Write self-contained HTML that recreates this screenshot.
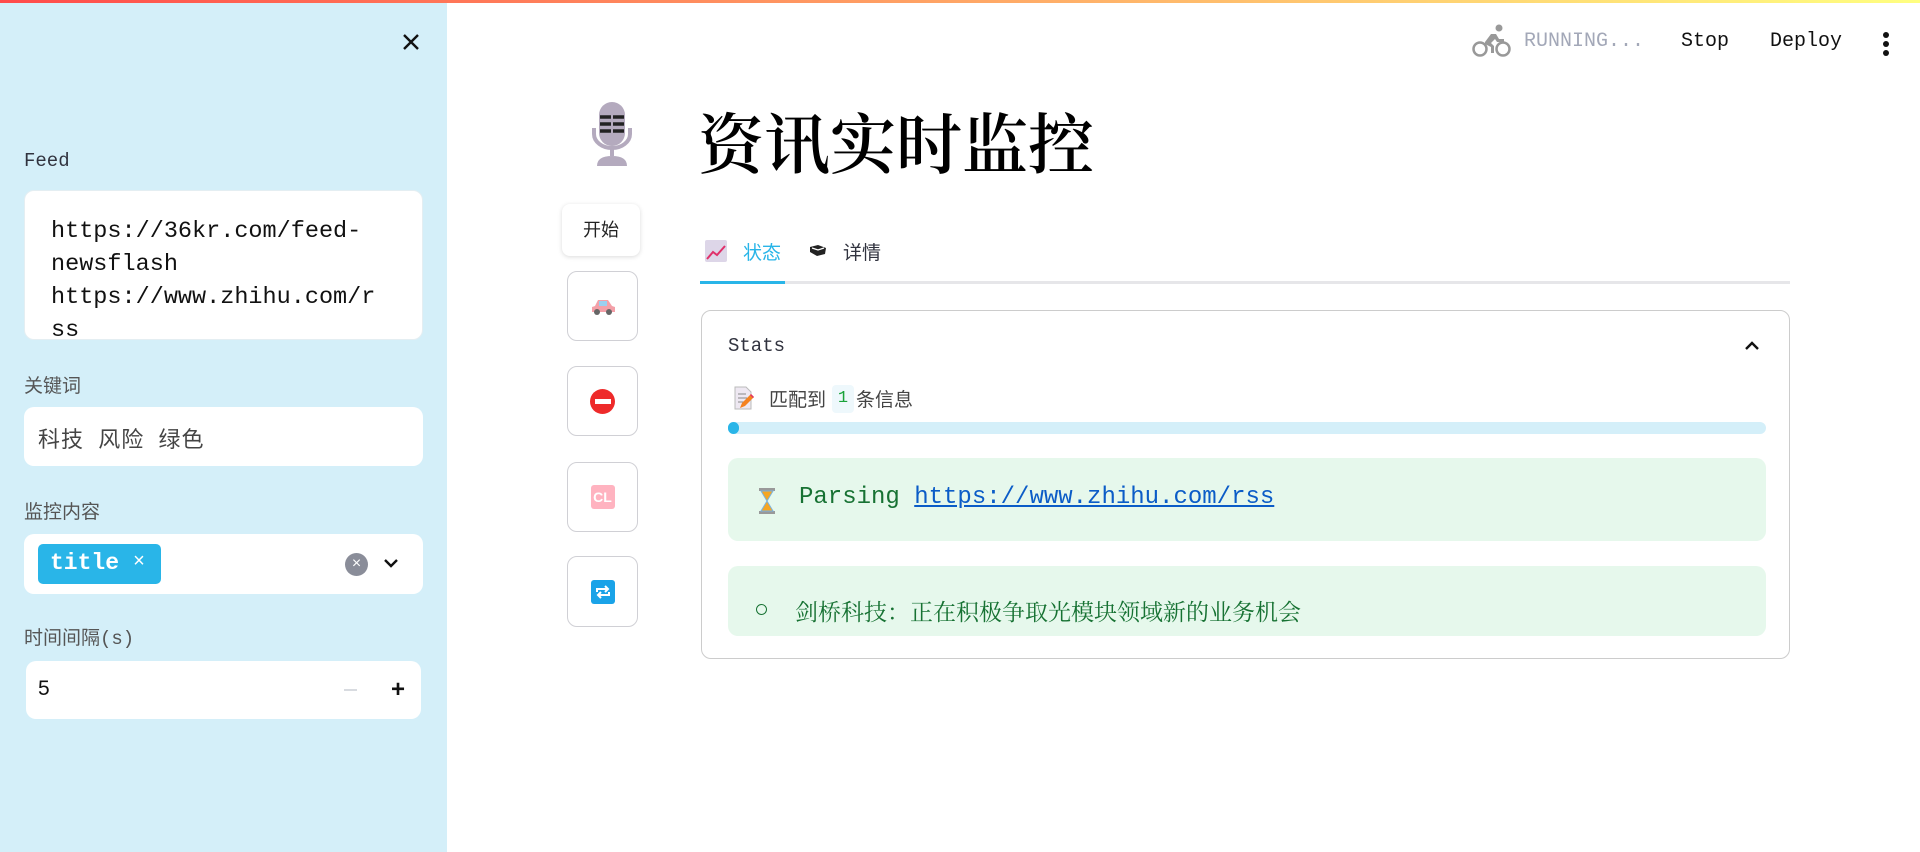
<!DOCTYPE html>
<html><head><meta charset="utf-8"><style>
*{box-sizing:border-box;margin:0;padding:0}
body{width:1920px;height:852px;overflow:hidden;background:#fff;font-family:"Liberation Sans","Noto Sans CJK SC",sans-serif;position:relative;color:#31333f}
.bar{position:absolute;left:0;top:0;width:1920px;height:3px;background:linear-gradient(90deg,#ff4b4b,#ffb86b 60%,#ffff80);z-index:5}
.side{position:absolute;left:0;top:0;width:447px;height:852px;background:#d4eff9}
.mono{font-family:"Liberation Mono","Noto Sans CJK SC",monospace}
.lbl{position:absolute;left:24px;font-size:17px;color:#31333f}
.box{position:absolute;left:24px;width:399px;background:#fff;border-radius:10px}
.a{position:absolute}
.btn{position:absolute;left:567px;width:71px;border:1px solid #d0d0d5;border-radius:10px;background:#fff;display:flex;align-items:center;justify-content:center}
</style></head><body>
<div class="bar"></div>
<div class="side">
 <svg class="a" style="left:401px;top:32px" width="20" height="20" viewBox="0 0 20 20"><path d="M3 3L17 17M17 3L3 17" stroke="#111" stroke-width="2.4"/></svg>
 <div class="lbl mono" style="top:150px;font-size:19px">Feed</div>
 <div class="box mono" style="top:190px;height:150px;overflow:hidden;padding:24px 10px 0 26px;font-size:23.5px;line-height:33px;color:#111;border:1px solid #e4eef2;white-space:nowrap">https://36kr.com/feed-<br>newsflash<br>https://www.zhihu.com/r<br>ss</div>
 <div class="lbl" style="top:371px;font-size:19px;color:#555">关键词</div>
 <div class="box" style="top:407px;height:59px;padding:15px 14px;font-size:22px;color:#444;letter-spacing:1px">科技&nbsp; 风险&nbsp; 绿色</div>
 <div class="lbl" style="top:497px;font-size:19px;color:#555">监控内容</div>
 <div class="box" style="top:534px;height:60px">
  <div class="a mono" style="left:14px;top:10px;width:123px;height:40px;background:#29b5e8;border-radius:5px;color:#fff;font-size:23px;font-weight:bold;padding:6px 0 0 12px;white-space:nowrap">title<span style="font-weight:normal;font-size:20px;position:absolute;left:95px;top:7px">×</span></div>
  <div class="a" style="left:321px;top:19px;width:23px;height:23px;border-radius:50%;background:#8a8d99;color:#fff;font-size:16px;text-align:center;line-height:22px">×</div>
  <svg class="a" style="left:358px;top:22px" width="18" height="14" viewBox="0 0 18 14"><path d="M3 4l6 6 6-6" stroke="#111" stroke-width="2.4" fill="none"/></svg>
 </div>
 <div class="lbl mono" style="top:623px;font-size:19px;color:#555">时间间隔(s)</div>
 <div class="box" style="top:661px;left:26px;width:395px;height:58px">
  <div class="a" style="left:12px;top:16px;font-size:21px;color:#111">5</div>
  <div class="a" style="left:318px;top:28px;width:13px;height:2px;background:#d8dbe0"></div>
  <div class="a" style="left:365px;top:22px;font-size:24px;font-weight:bold;color:#111;line-height:14px">+</div>
 </div>
</div>
<!-- header -->
<svg class="a" style="left:1472px;top:24px" width="40" height="34" viewBox="0 0 40 34"><circle cx="8" cy="25" r="6.5" stroke="#999" stroke-width="2.5" fill="none"/><circle cx="31" cy="25" r="6.5" stroke="#999" stroke-width="2.5" fill="none"/><circle cx="27" cy="4" r="3.5" fill="#999"/><path d="M13 18l6-8h5l3 5h5v3h-7l-2-3-4 4 3 3v7h-3v-6l-6-3z" fill="#999"/></svg>
<div class="a mono" style="left:1524px;top:30px;font-size:20px;color:#a3a8b8">RUNNING...</div>
<div class="a mono" style="left:1681px;top:30px;font-size:20px;color:#111">Stop</div>
<div class="a mono" style="left:1770px;top:30px;font-size:20px;color:#111">Deploy</div>
<div class="a" style="left:1883px;top:32px;width:6px"><div style="width:6px;height:6px;border-radius:3px;background:#111;margin-bottom:3px"></div><div style="width:6px;height:6px;border-radius:3px;background:#111;margin-bottom:3px"></div><div style="width:6px;height:6px;border-radius:3px;background:#111"></div></div>
<!-- mic -->
<svg class="a" style="left:590px;top:100px" width="44" height="68" viewBox="0 0 44 68"><rect x="9" y="2" width="26" height="44" rx="13" fill="#b4aabe"/><path d="M4 28v6a18 14 0 0 0 36 0v-6" stroke="#b4aabe" stroke-width="4" fill="none"/><rect x="20" y="48" width="4" height="8" fill="#b4aabe"/><path d="M7 66q0-10 15-10t15 10z" fill="#b4aabe"/><path d="M10 17h24M10 24h24M10 31h24" stroke="#222" stroke-width="3.5"/><path d="M22 15v18" stroke="#b4aabe" stroke-width="2"/></svg>
<div class="a" style="left:698px;top:92px;font-size:66px;color:#000;font-family:'Noto Serif CJK SC',serif;font-weight:600">资讯实时监控</div>
<div class="a" style="left:562px;top:204px;width:78px;height:52px;background:#fff;border-radius:8px;box-shadow:0 1px 5px rgba(0,0,0,.15);font-size:18px;color:#222;text-align:center;line-height:52px">开始</div>
<div class="btn" style="top:271px;height:70px"><svg width="26" height="20" viewBox="0 0 26 20"><path d="M2 11l3-1 3-6h10l4 6 3 1v5H2z" fill="#f4a0a8"/><rect x="9" y="5" width="8" height="5" fill="#9ad0f0"/><circle cx="7" cy="16" r="3" fill="#666"/><circle cx="19" cy="16" r="3" fill="#666"/></svg></div>
<div class="btn" style="top:366px;height:70px"><div style="width:25px;height:25px;border-radius:50%;background:#ee2a2a;display:flex;align-items:center;justify-content:center"><div style="width:16px;height:5px;background:#fff"></div></div></div>
<div class="btn" style="top:462px;height:70px"><div style="width:24px;height:24px;border-radius:3px;background:#ffb3c0;color:#fff;font-weight:bold;font-size:14px;text-align:center;line-height:24px">CL</div></div>
<div class="btn" style="top:556px;height:71px"><div style="width:24px;height:24px;border-radius:3px;background:#1aa3e8;display:flex;align-items:center;justify-content:center"><svg width="18" height="16" viewBox="0 0 18 16"><path d="M3 8V5h11M11 2l3 3-3 3M15 8v3H4M7 14l-3-3 3-3" stroke="#fff" stroke-width="2" fill="none"/></svg></div></div>
<!-- tabs -->
<svg class="a" style="left:705px;top:240px" width="22" height="22" viewBox="0 0 22 22"><rect width="22" height="22" rx="2" fill="#ddd6e8"/><path d="M2 19l6-7 4 3 8-9" stroke="#e0306a" stroke-width="2" fill="none"/></svg>
<div class="a" style="left:743px;top:238px;font-size:19px;color:#29b5e8">状态</div>
<svg class="a" style="left:809px;top:243px" width="18" height="14" viewBox="0 0 18 14"><path d="M1 4l8-2 8 3-1 6-8 2-7-4z" fill="#222"/><path d="M3 5l6 2 6-2" stroke="#fff" stroke-width="1.2" fill="none"/></svg>
<div class="a" style="left:843px;top:238px;font-size:19px;color:#31333f">详情</div>
<div class="a" style="left:700px;top:281px;width:1090px;height:3px;background:#e6e6e9"></div>
<div class="a" style="left:700px;top:281px;width:85px;height:3px;background:#29b5e8"></div>
<!-- card -->
<div class="a" style="left:701px;top:310px;width:1089px;height:349px;border:1px solid #ccc;border-radius:10px;overflow:hidden">
 <div class="a mono" style="left:26px;top:24px;font-size:19px;color:#31333f">Stats</div>
 <svg class="a" style="left:1041px;top:28px" width="18" height="12" viewBox="0 0 18 12"><path d="M3 10l6-6 6 6" stroke="#111" stroke-width="2.4" fill="none"/></svg>
 <svg class="a" style="left:31px;top:75px" width="22" height="24" viewBox="0 0 22 24"><path d="M2 1h11l5 5v17H2z" fill="#eee8f2" stroke="#bbb"/><path d="M5 8h8M5 12h9M5 16h6" stroke="#888"/><path d="M7 22l2-5 9-9 3 3-9 9z" fill="#f58220"/><path d="M17 9l3 3 1-1-3-3z" fill="#e0306a"/></svg>
 <div class="a" style="left:67px;top:74px;font-size:19px;color:#444">匹配到</div>
 <div class="a mono" style="left:130px;top:74px;width:22px;height:28px;background:#eef8fc;border-radius:4px;color:#1aa33a;font-size:17px;text-align:center;line-height:28px">1</div>
 <div class="a" style="left:154px;top:74px;font-size:19px;color:#444">条信息</div>
 <div class="a" style="left:26px;top:111px;width:1038px;height:12px;background:#d4eff9;border-radius:6px"></div>
 <div class="a" style="left:26px;top:111px;width:11px;height:12px;background:#29b5e8;border-radius:6px"></div>
 <div class="a" style="left:26px;top:147px;width:1038px;height:83px;background:#e6f8ec;border-radius:10px">
  <svg class="a" style="left:30px;top:30px" width="18" height="26" viewBox="0 0 18 26"><rect x="1" y="0" width="16" height="3" fill="#999"/><rect x="1" y="23" width="16" height="3" fill="#999"/><path d="M3 3h12l-6 10 6 10H3l6-10z" fill="#f5a623" stroke="#7ab3e0"/></svg>
  <div class="a mono" style="left:71px;top:26px;font-size:24px;color:#177233">Parsing <span style="color:#0b5cc7;text-decoration:underline">https://www.zhihu.com/rss</span></div>
 </div>
 <div class="a" style="left:26px;top:255px;width:1038px;height:70px;background:#e6f8ec;border-radius:10px">
  <div class="a" style="left:28px;top:38px;width:11px;height:11px;border:1.5px solid #177233;border-radius:50%"></div>
  <div class="a" style="left:67px;top:28px;font-size:23px;color:#177233;font-family:'Noto Serif CJK SC',serif">剑桥科技：正在积极争取光模块领域新的业务机会</div>
 </div>
</div>
</body></html>
